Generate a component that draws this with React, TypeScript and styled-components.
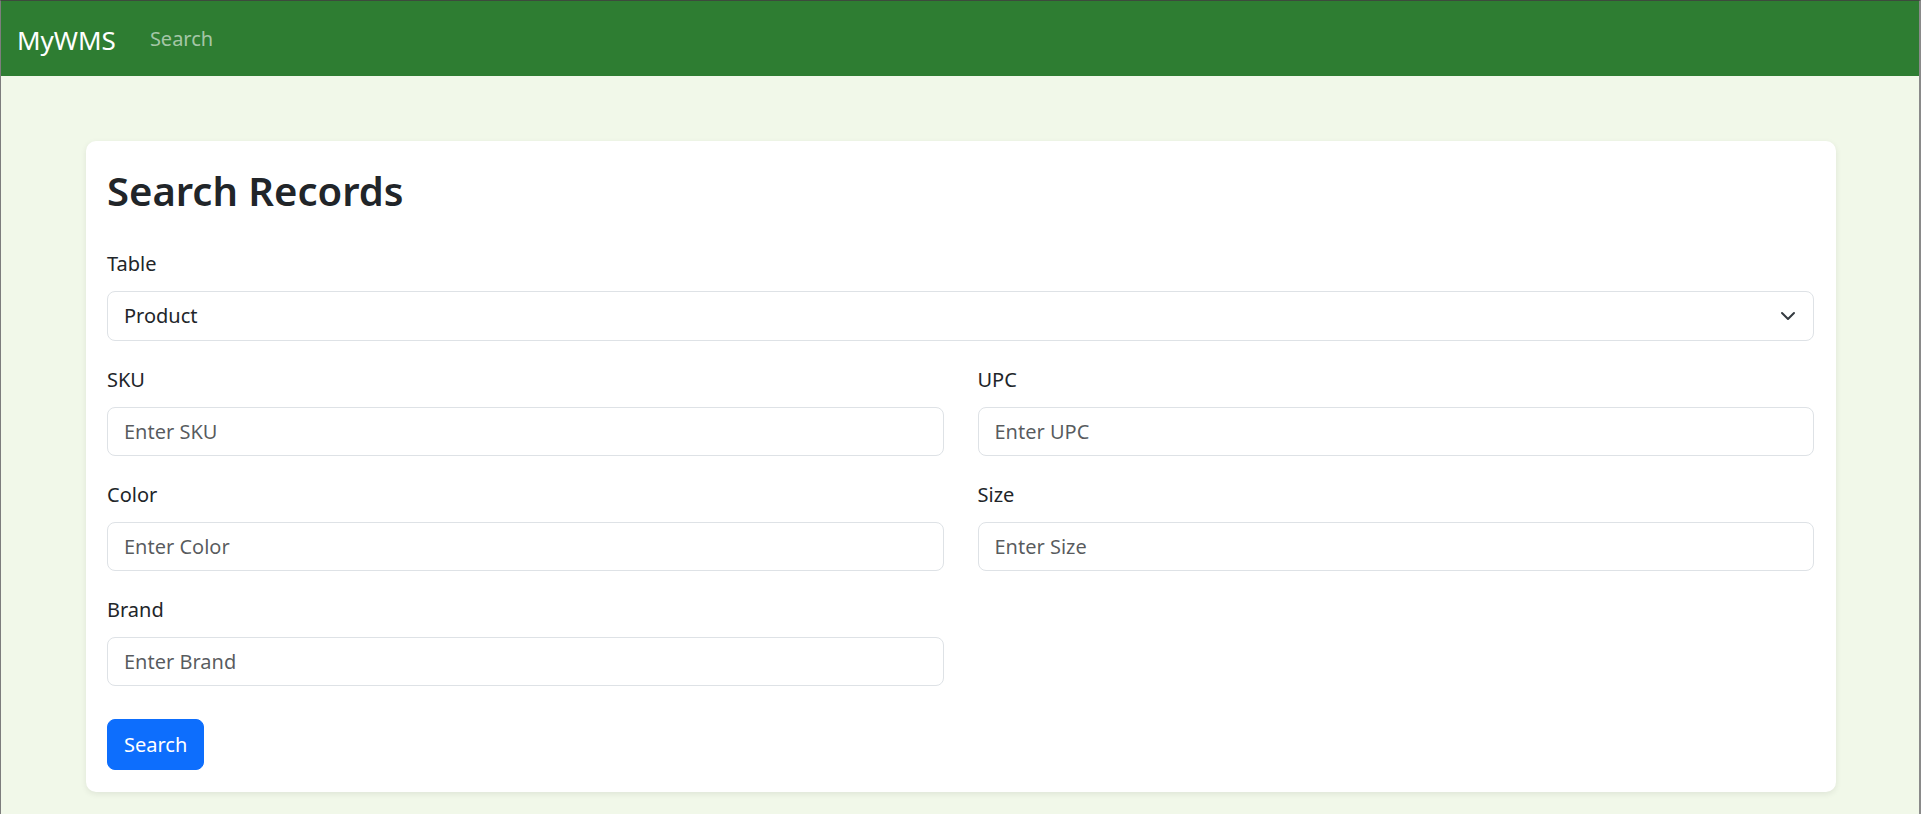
import React from "react";
import styled, { createGlobalStyle } from "styled-components";

const GlobalStyle = createGlobalStyle`
  html, body {
    margin: 0;
    padding: 0;
  }
  body {
    font-family: "Noto Sans", "Open Sans", sans-serif;
    color: #212529;
    background: #f1f8e9;
  }
  * { box-sizing: border-box; }
`;

const Frame = styled.div`
  min-height: 814px;
  background: #f1f8e9;
  border-top: 1px solid #3d4a3d;
  border-left: 1px solid #7d7d7d;
  border-right: 2px solid #8a8a8a;
`;

const NavBar = styled.nav`
  height: 75px;
  background: #2e7d32;
  display: flex;
  align-items: center;
  padding: 0 16px;
`;

const Brand = styled.a`
  font-size: 26px;
  line-height: 36px;
  color: #ffffff;
  text-decoration: none;
  margin-right: 34px;
  padding-top: 2px;
`;

const NavLink = styled.a<{ $active?: boolean }>`
  font-size: 20px;
  line-height: 30px;
  color: ${(p) => (p.$active ? "#ffffff" : "rgba(255, 255, 255, 0.58)")};
  text-decoration: none;
`;

const Main = styled.main`
  padding: 65px 83px 22px 85px;
`;

const Card = styled.section`
  background: #ffffff;
  border-radius: 10px;
  box-shadow: 0 2px 6px rgba(0, 0, 0, 0.08);
  padding: 22px 22px 22px 21px;
`;

const Title = styled.h1`
  margin: 0 0 30px;
  font-size: 40px;
  line-height: 56px;
  font-weight: 600;
  color: #212529;
`;

const Field = styled.div<{ $gap?: number }>`
  display: flex;
  flex-direction: column;
  margin-bottom: ${(p) => p.$gap ?? 0}px;
`;

const Label = styled.label`
  font-size: 20px;
  line-height: 30px;
  color: #212529;
  margin-bottom: 12px;
`;

const SelectWrap = styled.div`
  position: relative;
`;

const Select = styled.select`
  width: 100%;
  height: 50px;
  appearance: none;
  -webkit-appearance: none;
  font-family: inherit;
  font-size: 20px;
  line-height: 30px;
  color: #212529;
  background: #ffffff;
  border: 1px solid #dee2e6;
  border-radius: 8px;
  padding: 0 56px 0 16px;
  outline: none;
`;

const Chevron = styled.svg`
  position: absolute;
  right: 18px;
  top: 50%;
  transform: translateY(-50%);
  pointer-events: none;
`;

const Input = styled.input`
  width: 100%;
  height: 49px;
  font-family: inherit;
  font-size: 20px;
  line-height: 30px;
  color: #212529;
  background: #ffffff;
  border: 1px solid #dee2e6;
  border-radius: 8px;
  padding: 0 16px;
  outline: none;
  &::placeholder {
    color: rgba(33, 37, 41, 0.75);
  }
`;

const Grid = styled.div`
  display: grid;
  grid-template-columns: 1fr 1fr;
  column-gap: 34px;
  row-gap: 24px;
  margin-bottom: 33px;
`;

const Button = styled.button`
  font-family: inherit;
  font-size: 20px;
  line-height: 30px;
  color: #ffffff;
  background: #0d6efd;
  border: 1px solid #0d6efd;
  border-radius: 8px;
  padding: 10px 16px 9px;
  cursor: pointer;
`;

const fields = [
  { id: "sku", label: "SKU", placeholder: "Enter SKU" },
  { id: "upc", label: "UPC", placeholder: "Enter UPC" },
  { id: "color", label: "Color", placeholder: "Enter Color" },
  { id: "size", label: "Size", placeholder: "Enter Size" },
  { id: "brand", label: "Brand", placeholder: "Enter Brand" },
];

export default function App() {
  return (
    <>
      <GlobalStyle />
      <Frame>
        <NavBar>
          <Brand href="#">MyWMS</Brand>
          <NavLink href="#">Search</NavLink>
        </NavBar>
        <Main>
          <Card>
            <Title>Search Records</Title>
            <Field $gap={24}>
              <Label htmlFor="table">Table</Label>
              <SelectWrap>
                <Select id="table" defaultValue="product">
                  <option value="product">Product</option>
                  <option value="location">Location</option>
                  <option value="inventory">Inventory</option>
                </Select>
                <Chevron width="16" height="16" viewBox="0 0 16 16" fill="none">
                  <path
                    d="m2 5 6 6 6-6"
                    stroke="#343a40"
                    strokeWidth="2"
                    strokeLinecap="round"
                    strokeLinejoin="round"
                  />
                </Chevron>
              </SelectWrap>
            </Field>
            <Grid>
              {fields.map((f) => (
                <Field key={f.id}>
                  <Label htmlFor={f.id}>{f.label}</Label>
                  <Input id={f.id} placeholder={f.placeholder} />
                </Field>
              ))}
            </Grid>
            <Button type="button">Search</Button>
          </Card>
        </Main>
      </Frame>
    </>
  );
}
